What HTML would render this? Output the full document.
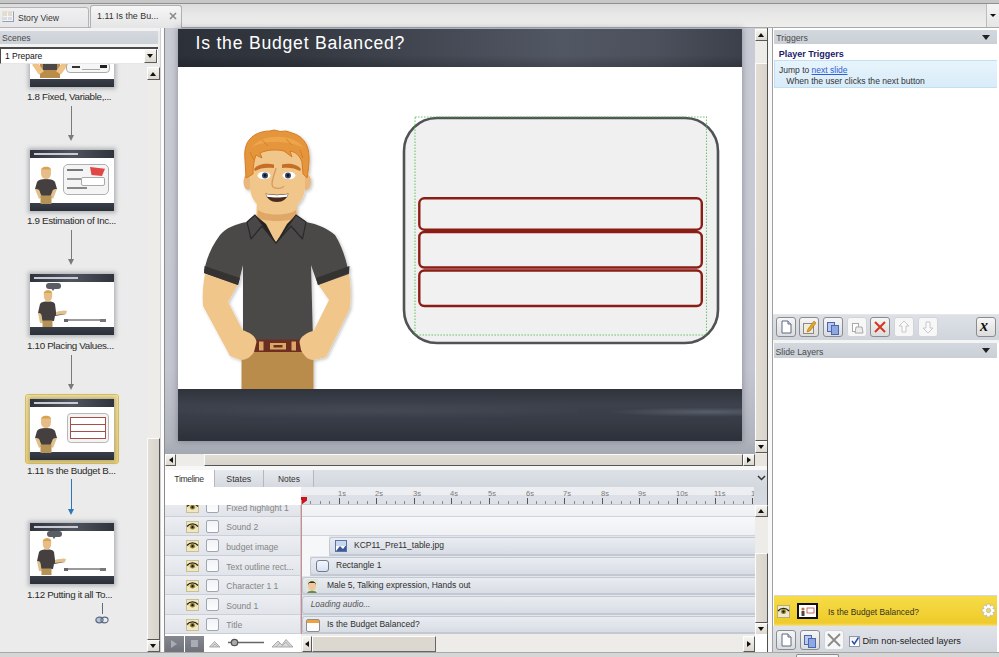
<!DOCTYPE html>
<html><head><meta charset="utf-8">
<style>
*{margin:0;padding:0;box-sizing:border-box}
html,body{width:999px;height:657px;overflow:hidden;background:#d6d6d6;font-family:"Liberation Sans",sans-serif;color:#333}
.a{position:absolute}
.t{white-space:nowrap}
</style></head><body>
<div class="a" style="left:0px;top:0px;width:999px;height:3px;background:#c7c7c7"></div>
<div class="a" style="left:0px;top:3px;width:999px;height:1px;background:#8f8f8f"></div>
<div class="a" style="left:0px;top:4px;width:999px;height:24px;background:linear-gradient(#dcdcde,#e6e7e6 40%,#eff0ed)"></div>
<div class="a" style="left:0px;top:27px;width:999px;height:1px;background:#a9a9a9"></div>
<div class="a" style="left:-3px;top:7px;width:92px;height:21px;background:linear-gradient(#f0f0f1,#e6e6e8);border:1px solid #b4b4b4;border-radius:3px 3px 0 0"></div>
<div class="a" style="left:2px;top:11px;width:12px;height:11px;border:1px solid #8fa0b4;border-top-color:#e0e0e0;border-left-color:#e0e0e0;background:#f3f3f3"></div>
<div class="a" style="left:3px;top:12px;width:4px;height:4px;background:#e2dccb"></div>
<div class="a" style="left:8px;top:12px;width:4px;height:4px;background:#e2dccb"></div>
<div class="a" style="left:3px;top:17px;width:4px;height:3px;background:#d8dce2"></div>
<div class="a" style="left:8px;top:17px;width:4px;height:3px;background:#d8dce2"></div>
<div class="a t" style="left:18px;top:13.72px;font-size:8.6px;line-height:8.6px;color:#333">Story View</div>
<div class="a" style="left:90px;top:5px;width:92px;height:24px;background:linear-gradient(#f6f6f6,#e4e4e5);border:1px solid #b0b0b0;border-bottom:none;border-radius:3px 3px 0 0"></div>
<div class="a t" style="left:97px;top:12.47px;font-size:8.9px;line-height:8.9px;color:#333">1.11 Is the Bu...</div>
<svg class="a" style="left:169px;top:12px" width="8" height="8"><path d="M1 1L7 7M7 1L1 7" stroke="#8a8a8a" stroke-width="1.6"/></svg>
<div class="a" style="left:986px;top:4px;width:13px;height:23px;border-left:1px solid #bdbdbd;background:linear-gradient(#f4f4f4,#e6e6e6)"></div>
<div class="a" style="left:990px;top:14px;border-left:3px solid transparent;border-right:3px solid transparent;border-top:3px solid #111"></div>
<div class="a" style="left:0px;top:28px;width:161px;height:624px;background:#ebebeb"></div>
<div class="a" style="left:0px;top:28px;width:160px;height:3px;background:#f2f2f2"></div>
<div class="a" style="left:0px;top:30.5px;width:158px;height:13.5px;background:linear-gradient(#d5d9df,#ccd1d8)"></div>
<div class="a t" style="left:2px;top:33.72px;font-size:8.6px;line-height:8.6px;color:#4a4a4a">Scenes</div>
<div class="a" style="left:0px;top:44px;width:158px;height:3px;background:#f2f2f2"></div>
<div class="a" style="left:0px;top:47px;width:158px;height:17px;background:#fff;border:1px solid #4a4a4a;border-top-width:2px;border-left-width:1px;border-right:none;border-bottom:1px solid #e6e6e6"></div>
<div class="a t" style="left:5px;top:51.80px;font-size:8.5px;line-height:8.5px;color:#111">1 Prepare</div>
<div class="a" style="left:144px;top:49px;width:13px;height:14px;background:linear-gradient(#f7f5f1,#dcd8cf);border:1px solid;border-color:#fdfdfd #5a5a5a #5a5a5a #fdfdfd"></div>
<div class="a" style="left:147.0px;top:54.0px;border-left:3.5px solid transparent;border-right:3.5px solid transparent;border-top:4px solid #111"></div>
<div class="a" style="left:147px;top:67px;width:13px;height:585px;background:#eeece8"></div>
<div class="a" style="left:147px;top:438px;width:13px;height:202px;background:linear-gradient(90deg,#e2ded6,#d8d4cb);border:1px solid;border-color:#fbfbfb #555 #555 #fbfbfb"></div>
<div class="a" style="left:147px;top:67px;width:13px;height:13px;background:linear-gradient(#f7f5f1,#dcd8cf);border:1px solid;border-color:#fdfdfd #5a5a5a #5a5a5a #fdfdfd"></div>
<div class="a" style="left:150.0px;top:71.5px;border-left:3.5px solid transparent;border-right:3.5px solid transparent;border-bottom:4px solid #111"></div>
<div class="a" style="left:147px;top:640px;width:13px;height:12px;background:linear-gradient(#f7f5f1,#dcd8cf);border:1px solid;border-color:#fdfdfd #5a5a5a #5a5a5a #fdfdfd"></div>
<div class="a" style="left:150.0px;top:644.0px;border-left:3.5px solid transparent;border-right:3.5px solid transparent;border-top:4px solid #111"></div>
<div class="a" style="left:0;top:64px;width:147px;height:588px;overflow:hidden">
<div class="a" style="left:30px;top:-38px;width:84px;height:61px;background:#fff;box-shadow:0 0 4px 2px rgba(110,115,125,0.45)">
<div class="a" style="left:0;top:0;width:84px;height:61px;filter:blur(0.3px)">
<div class="a" style="left:0;top:53px;width:84px;height:8px;background:linear-gradient(#3a3e48,#2b2f38)"></div>
<div class="a" style="left:10px;top:38px;width:20px;height:14px;background:#b98c4b"></div><div class="a" style="left:13px;top:38px;width:14px;height:6px;background:#4b4847"></div><div class="a" style="left:5px;top:36px;width:6px;height:12px;background:#eec38a;transform:rotate(-35deg)"></div><div class="a" style="left:29px;top:36px;width:6px;height:12px;background:#eec38a;transform:rotate(35deg)"></div><div class="a" style="left:36px;top:36px;width:44px;height:11px;border:1px solid #aaa;border-radius:4px;background:#f6f6f6"></div><div class="a" style="left:42px;top:40px;width:8px;height:2px;background:#333"></div><div class="a" style="left:52px;top:43px;width:18px;height:1px;background:#aaa"></div><div class="a" style="left:70px;top:39px;width:7px;height:3px;background:#222"></div>
</div></div>
<div class="a t" style="left:27px;top:28.20px;font-size:9.8px;line-height:9.8px;color:#2a2a2a;letter-spacing:-0.33px">1.8 Fixed, Variable,...</div>
<div class="a" style="left:71px;top:42px;width:1px;height:30px;background:#7a7a7a"></div>
<div class="a" style="left:68px;top:71px;border-left:3.5px solid transparent;border-right:3.5px solid transparent;border-top:6px solid #7a7a7a"></div>
<div class="a" style="left:30px;top:86px;width:84px;height:61px;background:#fff;box-shadow:0 0 4px 2px rgba(110,115,125,0.45)">
<div class="a" style="left:0;top:0;width:84px;height:61px;filter:blur(0.3px)">
<div class="a" style="left:0;top:0;width:84px;height:8px;background:linear-gradient(90deg,#2f333c,#50545e,#2f333c)"></div><div class="a" style="left:4px;top:3px;width:44px;height:2px;background:#c9ccd2"></div>
<div class="a" style="left:0;top:53px;width:84px;height:8px;background:linear-gradient(#3a3e48,#2b2f38)"></div>
<svg class="a" style="left:5px;top:16px" width="22.0" height="38.0" viewBox="0 0 22 38"><path d="M2 16 C3 14 6 13 11 13 C16 13 19 14 20 16 L22 23 L18 24 L17 30 L5 30 L4 24 L0 23 Z" fill="#45403f"/><path d="M0 23 L4 24 L7 31 L4 33 Z M22 23 L18 24 L15 31 L18 33 Z" fill="#e2c08c"/><rect x="5.5" y="29.5" width="11" height="8.5" fill="#b59256"/><ellipse cx="11" cy="7.3" rx="5" ry="6" fill="#e6bd86"/><path d="M6 6 C5.5 1.5 8.5 0.8 11 0.8 C14 0.8 16.5 1.5 16 6 L15 3.5 L7 3.5 Z" fill="#d8a24e"/></svg><div class="a" style="left:33px;top:14px;width:46px;height:31px;background:#f4f4f4;border:1px solid #b0b0b0;border-radius:5px"></div><div class="a" style="left:60px;top:17px;width:15px;height:9px;background:#e04848;clip-path:polygon(0 0,100% 20%,80% 100%,10% 90%)"></div><div class="a" style="left:37px;top:19px;width:16px;height:2px;background:#777"></div><div class="a" style="left:37px;top:28px;width:14px;height:2px;background:#999"></div><div class="a" style="left:37px;top:37px;width:20px;height:2px;background:#888"></div><div class="a" style="left:51px;top:27px;width:24px;height:9px;border:1px solid #aaa;background:#fff;border-radius:2px"></div>
</div></div>
<div class="a t" style="left:27px;top:152.20px;font-size:9.8px;line-height:9.8px;color:#2a2a2a;letter-spacing:-0.33px">1.9 Estimation of Inc...</div>
<div class="a" style="left:71px;top:166px;width:1px;height:30px;background:#7a7a7a"></div>
<div class="a" style="left:68px;top:195px;border-left:3.5px solid transparent;border-right:3.5px solid transparent;border-top:6px solid #7a7a7a"></div>
<div class="a" style="left:30px;top:210px;width:84px;height:61px;background:#fff;box-shadow:0 0 4px 2px rgba(110,115,125,0.45)">
<div class="a" style="left:0;top:0;width:84px;height:61px;filter:blur(0.3px)">
<div class="a" style="left:0;top:0;width:84px;height:8px;background:linear-gradient(90deg,#2f333c,#50545e,#2f333c)"></div><div class="a" style="left:4px;top:3px;width:44px;height:2px;background:#c9ccd2"></div>
<div class="a" style="left:0;top:53px;width:84px;height:8px;background:linear-gradient(#3a3e48,#2b2f38)"></div>
<svg class="a" style="left:7px;top:16px" width="30" height="37" viewBox="0 0 30 37"><path d="M3 14 C4 12 7 11.5 11 11.5 C15 11.5 17 12 18 14 L19 22 L28 21.5 L29 24 L18 26 L17 31 L5 31 L4 24 L1 23 Z" fill="#45403f"/><path d="M19 22 L27 20.5 L30 21 L29 24 L19 25 Z" fill="#e2c08c"/><path d="M1 23 L4 24 L6 33 L3 33 Z" fill="#e2c08c"/><rect x="5.5" y="30.5" width="10" height="6.5" fill="#b59256"/><ellipse cx="11" cy="6" rx="4.2" ry="5.6" fill="#e6bd86"/><path d="M6.8 5 C6.5 1 9 0.3 11 0.3 C13.5 0.3 15.5 1 15.2 5 L14.3 3 L7.7 3 Z" fill="#d8a24e"/></svg><div class="a" style="left:16px;top:9px;width:15px;height:6px;background:#5a5d63;border-radius:3px"></div><div class="a" style="left:21px;top:14px;border-left:2px solid transparent;border-right:2px solid transparent;border-top:3px solid #5a5d63"></div><div class="a" style="left:34px;top:45px;width:42px;height:2px;background:#9a9a9a"></div><div class="a" style="left:34px;top:44.5px;width:4px;height:3px;background:#666"></div><div class="a" style="left:70px;top:44.5px;width:6px;height:3px;background:#777"></div>
</div></div>
<div class="a t" style="left:27px;top:277.20px;font-size:9.8px;line-height:9.8px;color:#2a2a2a;letter-spacing:-0.33px">1.10 Placing Values...</div>
<div class="a" style="left:71px;top:291px;width:1px;height:30px;background:#7a7a7a"></div>
<div class="a" style="left:68px;top:320px;border-left:3.5px solid transparent;border-right:3.5px solid transparent;border-top:6px solid #7a7a7a"></div>
<div class="a" style="left:25px;top:330px;width:94px;height:70px;background:linear-gradient(#f7e49c,#f0d674);border:1px solid #dcc05c;border-radius:3px"></div>
<div class="a" style="left:30px;top:335px;width:84px;height:61px;background:#fff;box-shadow:0 0 4px 2px rgba(110,115,125,0.45)">
<div class="a" style="left:0;top:0;width:84px;height:61px;filter:blur(0.3px)">
<div class="a" style="left:0;top:0;width:84px;height:8px;background:linear-gradient(90deg,#2f333c,#50545e,#2f333c)"></div><div class="a" style="left:4px;top:3px;width:44px;height:2px;background:#c9ccd2"></div>
<div class="a" style="left:0;top:53px;width:84px;height:8px;background:linear-gradient(#3a3e48,#2b2f38)"></div>
<svg class="a" style="left:5px;top:16px" width="22.0" height="38.0" viewBox="0 0 22 38"><path d="M2 16 C3 14 6 13 11 13 C16 13 19 14 20 16 L22 23 L18 24 L17 30 L5 30 L4 24 L0 23 Z" fill="#45403f"/><path d="M0 23 L4 24 L7 31 L4 33 Z M22 23 L18 24 L15 31 L18 33 Z" fill="#e2c08c"/><rect x="5.5" y="29.5" width="11" height="8.5" fill="#b59256"/><ellipse cx="11" cy="7.3" rx="5" ry="6" fill="#e6bd86"/><path d="M6 6 C5.5 1.5 8.5 0.8 11 0.8 C14 0.8 16.5 1.5 16 6 L15 3.5 L7 3.5 Z" fill="#d8a24e"/></svg><div class="a" style="left:37px;top:14px;width:42px;height:30px;background:#f3f3f3;border:1px solid #b8b8b8;border-radius:4px"></div><div class="a" style="left:40px;top:18px;width:36px;height:22px;border:1px solid #a65048;background:repeating-linear-gradient(#fff 0,#fff 6px,#a65048 6px,#a65048 7px)"></div>
</div></div>
<div class="a t" style="left:27px;top:402.20px;font-size:9.8px;line-height:9.8px;color:#2a2a2a;letter-spacing:-0.33px">1.11 Is the Budget B...</div>
<div class="a" style="left:71px;top:415px;width:1px;height:31px;background:#2a78b8"></div>
<div class="a" style="left:68px;top:445px;border-left:3.5px solid transparent;border-right:3.5px solid transparent;border-top:6px solid #2a78b8"></div>
<div class="a" style="left:30px;top:459px;width:84px;height:61px;background:#fff;box-shadow:0 0 4px 2px rgba(110,115,125,0.45)">
<div class="a" style="left:0;top:0;width:84px;height:61px;filter:blur(0.3px)">
<div class="a" style="left:0;top:0;width:84px;height:8px;background:linear-gradient(90deg,#2f333c,#50545e,#2f333c)"></div><div class="a" style="left:4px;top:3px;width:44px;height:2px;background:#c9ccd2"></div>
<div class="a" style="left:0;top:53px;width:84px;height:8px;background:linear-gradient(#3a3e48,#2b2f38)"></div>
<svg class="a" style="left:6px;top:15px" width="30" height="37" viewBox="0 0 30 37"><path d="M3 14 C4 12 7 11.5 11 11.5 C15 11.5 17 12 18 14 L19 22 L28 21.5 L29 24 L18 26 L17 31 L5 31 L4 24 L1 23 Z" fill="#45403f"/><path d="M19 22 L27 20.5 L30 21 L29 24 L19 25 Z" fill="#e2c08c"/><path d="M1 23 L4 24 L6 33 L3 33 Z" fill="#e2c08c"/><rect x="5.5" y="30.5" width="10" height="6.5" fill="#b59256"/><ellipse cx="11" cy="6" rx="4.2" ry="5.6" fill="#e6bd86"/><path d="M6.8 5 C6.5 1 9 0.3 11 0.3 C13.5 0.3 15.5 1 15.2 5 L14.3 3 L7.7 3 Z" fill="#d8a24e"/></svg><div class="a" style="left:17px;top:8px;width:15px;height:6px;background:#5a5d63;border-radius:3px"></div><div class="a" style="left:22px;top:13px;border-left:2px solid transparent;border-right:2px solid transparent;border-top:3px solid #5a5d63"></div><div class="a" style="left:34px;top:45px;width:42px;height:2px;background:#9a9a9a"></div><div class="a" style="left:34px;top:44.5px;width:4px;height:3px;background:#666"></div><div class="a" style="left:70px;top:44.5px;width:6px;height:3px;background:#777"></div>
</div></div>
<div class="a t" style="left:27px;top:526.20px;font-size:9.8px;line-height:9.8px;color:#2a2a2a;letter-spacing:-0.33px">1.12 Putting it all To...</div>
<div class="a" style="left:102px;top:539px;width:1px;height:11px;background:#5b6b82"></div>
<svg class="a" style="left:95px;top:552px" width="14" height="8"><ellipse cx="4.5" cy="4" rx="3.6" ry="2.8" fill="#b7c6d8" stroke="#5a6b84" stroke-width="1.2"/><ellipse cx="9.5" cy="4" rx="3.6" ry="2.8" fill="none" stroke="#5a6b84" stroke-width="1.2"/></svg>
</div>
<div class="a" style="left:160px;top:28px;width:1px;height:624px;background:#d0d0d0"></div>
<div class="a" style="left:161px;top:28px;width:3px;height:624px;background:#fcfcfc"></div>
<div class="a" style="left:164px;top:28px;width:1px;height:624px;background:#8c8c8c"></div>
<div class="a" style="left:165px;top:28px;width:590px;height:426px;background:linear-gradient(#c9ccd4,#c4c7d0 80%,#b0b4bc 97%,#a4a8b0)"></div>
<div class="a" style="left:178px;top:29px;width:564px;height:412px;box-shadow:0 0 6px 1px rgba(60,60,80,0.35)"></div>
<div class="a" style="left:178px;top:29px;width:564px;height:412px;background:#fff;overflow:hidden">
<div class="a" style="left:0;top:0;width:564px;height:38px;background:linear-gradient(90deg,#2c3039 0%,#323740 20%,#434853 45%,#525764 68%,#4b505c 85%,#3c404a 100%)"></div>
<div class="a" style="left:0;top:26px;width:564px;height:12px;background:linear-gradient(rgba(0,0,0,0),rgba(0,0,0,0.18))"></div>
<svg class="a" style="left:0;top:0" width="564" height="412" viewBox="178 29 564 412">
 <defs>
  <filter id="ds" x="-20%" y="-20%" width="140%" height="140%"><feDropShadow dx="1.5" dy="1.5" stdDeviation="1.6" flood-color="#000" flood-opacity="0.22"/></filter>
 </defs>
 <!-- rounded box -->
 <rect x="404" y="118" width="314" height="225" rx="33" ry="33" fill="#f0f0f1" stroke="#505255" stroke-width="2.6"/>
 <rect x="415" y="117" width="291.5" height="218" fill="none" stroke="#3cb83c" stroke-width="1.1" stroke-dasharray="1.6 1.4" opacity="0.75"/>
 <rect x="419.3" y="198.3" width="282.5" height="31.4" rx="5" fill="#f1f1f2" stroke="#8b1d14" stroke-width="2.4"/>
 <rect x="419.3" y="232" width="282.5" height="35.5" rx="5" fill="#f1f1f2" stroke="#8b1d14" stroke-width="2.4"/>
 <rect x="419.3" y="270.5" width="282.5" height="35.5" rx="5" fill="#f1f1f2" stroke="#8b1d14" stroke-width="2.4"/>

 <g filter="url(#ds)">
 <!-- pants -->
 <rect x="241.5" y="349" width="72" height="41" fill="#b98c4b"/>
 <!-- arms -->
 <path d="M205 274 L238 284 L228 302 L243 331 L256 340 L254 352 L241 360 L230 356 L203 306 C202 296 203 284 205 274 Z" fill="#f0c68a"/>
 <path d="M349 274 L318 284 L329 300 L313 332 L300 340 L301 350 L313 360 L326 357 L350 308 C351 296 351 284 349 274 Z" fill="#f0c68a"/>
 <!-- neck -->
 <path d="M257 198 L297 198 L297 222 L276 243 L256 222 Z" fill="#f0c68a"/>
 <path d="M258 210 C266 216 288 216 296 210 L297 218 C288 222 266 222 257 218 Z" fill="#e0a868"/>
 <!-- shirt -->
 <path d="M255 215 L276 243 L296 215 L306 222 C318 224 328 229 335 235 C342 246 347 262 349 274 L318 285 L311 265 L313 342 L243 342 L243 265 L238 285 L204 273 C206 258 212 246 220 235 C226 228 235 224 247 222 Z" fill="#4b4847"/>
 <!-- cuffs -->
 <path d="M204.5 266 L240 278 L238 285 L204 273 Z" fill="#353232"/>
 <path d="M349.5 266 L316 278 L318 285 L349 273 Z" fill="#353232"/>
 <!-- collar -->
 <path d="M255 215 L247 222 L251 239 L262 226 L276 243 Z" fill="#4a4746" stroke="#2c2a2a" stroke-width="1.2" stroke-linejoin="round"/>
 <path d="M296 215 L306 222 L302.5 239 L291 226 L276 243 Z" fill="#4a4746" stroke="#2c2a2a" stroke-width="1.2" stroke-linejoin="round"/>
 <path d="M255 215 L276 243 L266 224 Z" fill="#262424"/>
 <path d="M296 215 L276 243 L287 224 Z" fill="#262424"/>
 <!-- belt -->
 <rect x="247" y="339.5" width="62" height="12.5" fill="#6d2e22"/>
 <rect x="259" y="341.5" width="4.5" height="9" fill="#d9a866"/>
 <rect x="270" y="343" width="16" height="6.5" fill="#d9a866"/>
 <rect x="273.5" y="345" width="9" height="2.5" fill="#6d2e22"/>
 <rect x="291.5" y="341.5" width="4.5" height="9" fill="#d9a866"/>
 <!-- hands -->
 <path d="M242 330 C249 332 256 336 256.5 342 L254 352 C251 357 246 360 241 360 L232 356 L226 340 Z" fill="#f0c68a"/>
 <path d="M313 331 C306 333 300 337 299.5 342 L301 350 C304 356 308 360 313.5 360 L325 357 L330 340 Z" fill="#f0c68a"/>
 <!-- ears -->
 <ellipse cx="248" cy="182" rx="4.5" ry="8" fill="#e9b77c"/>
 <ellipse cx="306.5" cy="182" rx="4.5" ry="8" fill="#e9b77c"/>
 <!-- face -->
 <path d="M250 158 C250 142 262 138 277.5 138 C293 138 305 142 305 158 L305 186 C305 203 293 211 277.5 211 C262 211 250 203 250 186 Z" fill="#f0c68a"/>
 <!-- hair -->
 <path d="M246 178 L245 160 C244 150 246 143 250 139 C254 134 262 131 270 131 L274 130 L280 131.5 L286 131 L292 133 C300 135 306 141 308 149 C310 157 309 167 307 178 L303 174 L302 162 C300 156 296 152 290 151 L292 157 L284 151 C276 149 266 150 260 153 L262 158 L256 155 C254 160 253 167 253 174 Z" fill="#e5953a" stroke="#d67c26" stroke-width="1"/>
 <path d="M252 147 C258 139 270 136 282 137 C292 138 300 142 304 148 C296 144 286 142 276 142 C266 142 258 144 252 147 Z" fill="#f0aa50" opacity="0.75"/>
 <path d="M262 140 L268 146 M286 139 L292 145 M250 152 L254 160 M300 150 L303 158" stroke="#cf7420" stroke-width="1" opacity="0.7"/>
 <!-- brows -->
 <path d="M254 169 C258 164 266 163 274 164.5 L274 168 C266 167 260 168 255 171 Z" fill="#c66d26"/>
 <path d="M301 169 C297 164 289 163 282 164.5 L282 168 C289 167 295 168 300 171 Z" fill="#c66d26"/>
 <!-- eyes -->
 <ellipse cx="264" cy="175.5" rx="6.5" ry="3.8" fill="#fff"/>
 <ellipse cx="289" cy="175.5" rx="6.5" ry="3.8" fill="#fff"/>
 <circle cx="265" cy="175.5" r="3" fill="#3b4c6f"/>
 <circle cx="288" cy="175.5" r="3" fill="#3b4c6f"/>
 <circle cx="265" cy="175.5" r="1.4" fill="#101425"/>
 <circle cx="288" cy="175.5" r="1.4" fill="#101425"/>
 <!-- nose -->
 <path d="M276 168 C274 176 270 184 273 187 C276 189 282 189 284 186" fill="none" stroke="#d69a5c" stroke-width="1.3"/>
 <!-- mouth -->
 <path d="M265.5 193.5 C272 195 282 195 288.5 193.5 C287 199 283 202 277 202 C271 202 267 199 265.5 193.5 Z" fill="#4a2a1c"/>
 <path d="M266 194 C272 195.5 282 195.5 288 194 L287 196.8 C281 197.8 273 197.8 267 196.8 Z" fill="#fff"/>
 </g>
</svg>
<div class="a" style="left:0;top:360px;width:564px;height:52px;background:linear-gradient(#2e333c,#3c414b 30%,#363b45 65%,#2c3038)"></div>
<div class="a" style="left:380px;top:375px;width:200px;height:16px;background:radial-gradient(ellipse 50% 30% at 75% 50%,rgba(170,180,195,0.28),rgba(170,180,195,0) 100%)"></div>
<div class="a" style="left:0;top:372px;width:400px;height:20px;background:radial-gradient(ellipse 60% 40% at 50% 50%,rgba(150,160,175,0.10),rgba(150,160,175,0) 100%)"></div>
</div>
<div class="a t" style="left:195.5px;top:35.10px;font-size:17.6px;line-height:17.6px;color:#fff;letter-spacing:0.78px">Is the Budget Balanced?</div>
<div class="a" style="left:755px;top:29px;width:13px;height:425px;background:#eeece8"></div>
<div class="a" style="left:755px;top:63px;width:13px;height:378px;background:linear-gradient(90deg,#e2ded6,#d8d4cb);border:1px solid;border-color:#fbfbfb #555 #555 #fbfbfb"></div>
<div class="a" style="left:755px;top:29px;width:13px;height:12px;background:linear-gradient(#f7f5f1,#dcd8cf);border:1px solid;border-color:#fdfdfd #5a5a5a #5a5a5a #fdfdfd"></div>
<div class="a" style="left:758.0px;top:33.0px;border-left:3.5px solid transparent;border-right:3.5px solid transparent;border-bottom:4px solid #111"></div>
<div class="a" style="left:755px;top:441px;width:13px;height:12px;background:linear-gradient(#f7f5f1,#dcd8cf);border:1px solid;border-color:#fdfdfd #5a5a5a #5a5a5a #fdfdfd"></div>
<div class="a" style="left:758.0px;top:445.0px;border-left:3.5px solid transparent;border-right:3.5px solid transparent;border-top:4px solid #111"></div>
<div class="a" style="left:165px;top:454px;width:590px;height:12px;background:#eeece8"></div>
<div class="a" style="left:204px;top:454px;width:539px;height:12px;background:linear-gradient(#e2ded6,#d8d4cb);border:1px solid;border-color:#fbfbfb #555 #555 #fbfbfb"></div>
<div class="a" style="left:165px;top:454px;width:11px;height:12px;background:linear-gradient(#f7f5f1,#dcd8cf);border:1px solid;border-color:#fdfdfd #5a5a5a #5a5a5a #fdfdfd"></div>
<div class="a" style="left:168.5px;top:456.5px;border-top:3.5px solid transparent;border-bottom:3.5px solid transparent;border-right:4px solid #111"></div>
<div class="a" style="left:743px;top:454px;width:12px;height:12px;background:linear-gradient(#f7f5f1,#dcd8cf);border:1px solid;border-color:#fdfdfd #5a5a5a #5a5a5a #fdfdfd"></div>
<div class="a" style="left:747.0px;top:456.5px;border-top:3.5px solid transparent;border-bottom:3.5px solid transparent;border-left:4px solid #111"></div>
<div class="a" style="left:755px;top:454px;width:12px;height:12px;background:#e8e5df"></div>
<div class="a" style="left:767px;top:28px;width:1px;height:624px;background:#4f4f4f"></div>
<div class="a" style="left:165px;top:466px;width:602px;height:4px;background:#f7f7f7"></div>
<div class="a" style="left:165px;top:470px;width:602px;height:35px;background:linear-gradient(#dde1e7,#d3d8df 17px,#d7dbe1 35px)"></div>
<div class="a" style="left:165px;top:470px;width:49px;height:17px;background:#fff"></div>
<div class="a" style="left:214px;top:470px;width:50px;height:17px;background:linear-gradient(#e6e9ee,#d6dae0);border-left:1px solid #b5b9bf;border-right:1px solid #b5b9bf"></div>
<div class="a" style="left:264px;top:470px;width:50px;height:17px;background:linear-gradient(#e6e9ee,#d6dae0);border-right:1px solid #b5b9bf"></div>
<div class="a t" style="left:174.3px;top:475.22px;font-size:8.6px;line-height:8.6px;color:#333;letter-spacing:-0.35px">Timeline</div>
<div class="a t" style="left:226.3px;top:475.05px;font-size:8.8px;line-height:8.8px;color:#333">States</div>
<div class="a t" style="left:278px;top:475.39px;font-size:8.4px;line-height:8.4px;color:#333">Notes</div>
<svg class="a" style="left:757px;top:475px" width="9" height="6"><path d="M1 1L4.5 4.5L8 1" fill="none" stroke="#333" stroke-width="1.5"/></svg>
<div class="a" style="left:165px;top:487px;width:136px;height:18px;background:#fff"></div>
<div class="a" style="left:301px;top:487px;width:453px;height:18px;background:linear-gradient(#eceef2 0,#eceef2 8px,#dde1e7 8px,#dde1e7 100%);border-bottom:1px solid #c4c9d0;overflow:hidden">
<div class="a" style="left:9px;top:14px;width:1px;height:3px;background:#8a8a8a"></div>
<div class="a" style="left:19px;top:14px;width:1px;height:3px;background:#8a8a8a"></div>
<div class="a" style="left:28px;top:14px;width:1px;height:3px;background:#8a8a8a"></div>
<div class="a" style="left:38px;top:11px;width:1px;height:6px;background:#555"></div>
<div class="a t" style="left:37px;top:3.15px;font-size:7.5px;line-height:7.5px;color:#7a7a7a">1s</div>
<div class="a" style="left:47px;top:14px;width:1px;height:3px;background:#8a8a8a"></div>
<div class="a" style="left:56px;top:14px;width:1px;height:3px;background:#8a8a8a"></div>
<div class="a" style="left:66px;top:14px;width:1px;height:3px;background:#8a8a8a"></div>
<div class="a" style="left:75px;top:11px;width:1px;height:6px;background:#555"></div>
<div class="a t" style="left:74px;top:3.15px;font-size:7.5px;line-height:7.5px;color:#7a7a7a">2s</div>
<div class="a" style="left:85px;top:14px;width:1px;height:3px;background:#8a8a8a"></div>
<div class="a" style="left:94px;top:14px;width:1px;height:3px;background:#8a8a8a"></div>
<div class="a" style="left:103px;top:14px;width:1px;height:3px;background:#8a8a8a"></div>
<div class="a" style="left:113px;top:11px;width:1px;height:6px;background:#555"></div>
<div class="a t" style="left:112px;top:3.15px;font-size:7.5px;line-height:7.5px;color:#7a7a7a">3s</div>
<div class="a" style="left:122px;top:14px;width:1px;height:3px;background:#8a8a8a"></div>
<div class="a" style="left:132px;top:14px;width:1px;height:3px;background:#8a8a8a"></div>
<div class="a" style="left:141px;top:14px;width:1px;height:3px;background:#8a8a8a"></div>
<div class="a" style="left:150px;top:11px;width:1px;height:6px;background:#555"></div>
<div class="a t" style="left:149px;top:3.15px;font-size:7.5px;line-height:7.5px;color:#7a7a7a">4s</div>
<div class="a" style="left:160px;top:14px;width:1px;height:3px;background:#8a8a8a"></div>
<div class="a" style="left:169px;top:14px;width:1px;height:3px;background:#8a8a8a"></div>
<div class="a" style="left:179px;top:14px;width:1px;height:3px;background:#8a8a8a"></div>
<div class="a" style="left:188px;top:11px;width:1px;height:6px;background:#555"></div>
<div class="a t" style="left:187px;top:3.15px;font-size:7.5px;line-height:7.5px;color:#7a7a7a">5s</div>
<div class="a" style="left:197px;top:14px;width:1px;height:3px;background:#8a8a8a"></div>
<div class="a" style="left:207px;top:14px;width:1px;height:3px;background:#8a8a8a"></div>
<div class="a" style="left:216px;top:14px;width:1px;height:3px;background:#8a8a8a"></div>
<div class="a" style="left:226px;top:11px;width:1px;height:6px;background:#555"></div>
<div class="a t" style="left:225px;top:3.15px;font-size:7.5px;line-height:7.5px;color:#7a7a7a">6s</div>
<div class="a" style="left:235px;top:14px;width:1px;height:3px;background:#8a8a8a"></div>
<div class="a" style="left:244px;top:14px;width:1px;height:3px;background:#8a8a8a"></div>
<div class="a" style="left:254px;top:14px;width:1px;height:3px;background:#8a8a8a"></div>
<div class="a" style="left:263px;top:11px;width:1px;height:6px;background:#555"></div>
<div class="a t" style="left:262px;top:3.15px;font-size:7.5px;line-height:7.5px;color:#7a7a7a">7s</div>
<div class="a" style="left:273px;top:14px;width:1px;height:3px;background:#8a8a8a"></div>
<div class="a" style="left:282px;top:14px;width:1px;height:3px;background:#8a8a8a"></div>
<div class="a" style="left:291px;top:14px;width:1px;height:3px;background:#8a8a8a"></div>
<div class="a" style="left:301px;top:11px;width:1px;height:6px;background:#555"></div>
<div class="a t" style="left:300px;top:3.15px;font-size:7.5px;line-height:7.5px;color:#7a7a7a">8s</div>
<div class="a" style="left:310px;top:14px;width:1px;height:3px;background:#8a8a8a"></div>
<div class="a" style="left:320px;top:14px;width:1px;height:3px;background:#8a8a8a"></div>
<div class="a" style="left:329px;top:14px;width:1px;height:3px;background:#8a8a8a"></div>
<div class="a" style="left:338px;top:11px;width:1px;height:6px;background:#555"></div>
<div class="a t" style="left:337px;top:3.15px;font-size:7.5px;line-height:7.5px;color:#7a7a7a">9s</div>
<div class="a" style="left:348px;top:14px;width:1px;height:3px;background:#8a8a8a"></div>
<div class="a" style="left:357px;top:14px;width:1px;height:3px;background:#8a8a8a"></div>
<div class="a" style="left:367px;top:14px;width:1px;height:3px;background:#8a8a8a"></div>
<div class="a" style="left:376px;top:11px;width:1px;height:6px;background:#555"></div>
<div class="a t" style="left:375px;top:3.15px;font-size:7.5px;line-height:7.5px;color:#7a7a7a">10s</div>
<div class="a" style="left:385px;top:14px;width:1px;height:3px;background:#8a8a8a"></div>
<div class="a" style="left:395px;top:14px;width:1px;height:3px;background:#8a8a8a"></div>
<div class="a" style="left:404px;top:14px;width:1px;height:3px;background:#8a8a8a"></div>
<div class="a" style="left:414px;top:11px;width:1px;height:6px;background:#555"></div>
<div class="a t" style="left:413px;top:3.15px;font-size:7.5px;line-height:7.5px;color:#7a7a7a">11s</div>
<div class="a" style="left:423px;top:14px;width:1px;height:3px;background:#8a8a8a"></div>
<div class="a" style="left:432px;top:14px;width:1px;height:3px;background:#8a8a8a"></div>
<div class="a" style="left:442px;top:14px;width:1px;height:3px;background:#8a8a8a"></div>
<div class="a" style="left:451px;top:11px;width:1px;height:6px;background:#555"></div>
<div class="a t" style="left:450px;top:3.15px;font-size:7.5px;line-height:7.5px;color:#7a7a7a">12s</div>
<div class="a" style="left:461px;top:14px;width:1px;height:3px;background:#8a8a8a"></div>
<div class="a" style="left:470px;top:14px;width:1px;height:3px;background:#8a8a8a"></div>
<div class="a" style="left:479px;top:14px;width:1px;height:3px;background:#8a8a8a"></div>
<div class="a" style="left:0;top:10px;width:6px;height:8px;background:#c8141a;clip-path:polygon(0 0,100% 0,100% 45%,0 100%)"></div>
</div>
<div class="a" style="left:165px;top:505px;width:590px;height:129px;overflow:hidden">
<div class="a" style="left:0px;top:-8px;width:136px;height:20px;background:linear-gradient(#eceef2,#e1e4ea);border-bottom:1px solid #cbd0d7"></div>
<svg class="a" style="left:21px;top:-4px" width="13" height="12" viewBox="0 0 13 12"><rect x="0.5" y="0.5" width="12" height="11" fill="#efe8c8" stroke="#cdbf8a"/><path d="M1.5 6.2 C4 3 9 3 11.5 6.2 C9 9 4 9 1.5 6.2Z" fill="#e6dcb0"/><circle cx="6.5" cy="6.2" r="2.4" fill="#8a7a2a"/><circle cx="6.5" cy="6.2" r="1.1" fill="#1a1608"/><path d="M1 5.5 C4 2 9 2 12 5.5" fill="none" stroke="#2a2418" stroke-width="1.3"/></svg>
<div class="a" style="left:41px;top:-5px;width:13px;height:13px;border:1px solid #a0a6b0;border-radius:2px;background:linear-gradient(#f0f3f7,#fdfdfe)"></div>
<div class="a t" style="left:61.3px;top:-1.28px;font-size:8.6px;line-height:8.6px;color:#858585">Fixed highlight 1</div>
<div class="a" style="left:136px;top:-8px;width:454px;height:20px;background:linear-gradient(#f7f8fa,#eef0f3);border-bottom:1px solid #d0d4da"></div>
<div class="a" style="left:0px;top:12px;width:136px;height:19px;background:linear-gradient(#eceef2,#e1e4ea);border-bottom:1px solid #cbd0d7"></div>
<svg class="a" style="left:21px;top:16px" width="13" height="12" viewBox="0 0 13 12"><rect x="0.5" y="0.5" width="12" height="11" fill="#efe8c8" stroke="#cdbf8a"/><path d="M1.5 6.2 C4 3 9 3 11.5 6.2 C9 9 4 9 1.5 6.2Z" fill="#e6dcb0"/><circle cx="6.5" cy="6.2" r="2.4" fill="#8a7a2a"/><circle cx="6.5" cy="6.2" r="1.1" fill="#1a1608"/><path d="M1 5.5 C4 2 9 2 12 5.5" fill="none" stroke="#2a2418" stroke-width="1.3"/></svg>
<div class="a" style="left:41px;top:15px;width:13px;height:13px;border:1px solid #a0a6b0;border-radius:2px;background:linear-gradient(#f0f3f7,#fdfdfe)"></div>
<div class="a t" style="left:61.3px;top:17.72px;font-size:8.6px;line-height:8.6px;color:#858585">Sound 2</div>
<div class="a" style="left:136px;top:12px;width:454px;height:19px;background:linear-gradient(#f7f8fa,#eef0f3);border-bottom:1px solid #d0d4da"></div>
<div class="a" style="left:0px;top:31px;width:136px;height:20px;background:linear-gradient(#eceef2,#e1e4ea);border-bottom:1px solid #cbd0d7"></div>
<svg class="a" style="left:21px;top:35px" width="13" height="12" viewBox="0 0 13 12"><rect x="0.5" y="0.5" width="12" height="11" fill="#efe8c8" stroke="#cdbf8a"/><path d="M1.5 6.2 C4 3 9 3 11.5 6.2 C9 9 4 9 1.5 6.2Z" fill="#e6dcb0"/><circle cx="6.5" cy="6.2" r="2.4" fill="#8a7a2a"/><circle cx="6.5" cy="6.2" r="1.1" fill="#1a1608"/><path d="M1 5.5 C4 2 9 2 12 5.5" fill="none" stroke="#2a2418" stroke-width="1.3"/></svg>
<div class="a" style="left:41px;top:34px;width:13px;height:13px;border:1px solid #a0a6b0;border-radius:2px;background:linear-gradient(#f0f3f7,#fdfdfe)"></div>
<div class="a t" style="left:61.3px;top:37.72px;font-size:8.6px;line-height:8.6px;color:#858585">budget image</div>
<div class="a" style="left:136px;top:31px;width:454px;height:20px;background:linear-gradient(#e3e7ed,#d6dbe3);border-bottom:1px solid #c4c9d1">
<div class="a" style="left:0px;top:0px;width:28px;height:20px;background:#f6f7f9"></div>
<div class="a" style="left:28px;top:1px;width:426px;height:18px;border:1px solid #c3c9d3;border-right:none;border-radius:3px 0 0 3px;background:linear-gradient(#e9ecf1,#d8dde5)"><svg class="a" style="left:5px;top:2px" width="12" height="12"><rect x="0.5" y="0.5" width="11" height="11" fill="#fff" stroke="#5874a8"/><path d="M1 11 L5 6 L8 9 L11 5 L11 11Z" fill="#3a5a9a"/><rect x="1" y="1" width="10" height="5" fill="#c9d8ee"/></svg><div class="a t" style="left:24px;top:3.2px;font-size:8.5px;line-height:8.5px;color:#2e2e2e;">KCP11_Pre11_table.jpg</div></div>
</div>
<div class="a" style="left:0px;top:51px;width:136px;height:20px;background:linear-gradient(#eceef2,#e1e4ea);border-bottom:1px solid #cbd0d7"></div>
<svg class="a" style="left:21px;top:55px" width="13" height="12" viewBox="0 0 13 12"><rect x="0.5" y="0.5" width="12" height="11" fill="#efe8c8" stroke="#cdbf8a"/><path d="M1.5 6.2 C4 3 9 3 11.5 6.2 C9 9 4 9 1.5 6.2Z" fill="#e6dcb0"/><circle cx="6.5" cy="6.2" r="2.4" fill="#8a7a2a"/><circle cx="6.5" cy="6.2" r="1.1" fill="#1a1608"/><path d="M1 5.5 C4 2 9 2 12 5.5" fill="none" stroke="#2a2418" stroke-width="1.3"/></svg>
<div class="a" style="left:41px;top:54px;width:13px;height:13px;border:1px solid #a0a6b0;border-radius:2px;background:linear-gradient(#f0f3f7,#fdfdfe)"></div>
<div class="a t" style="left:61.3px;top:57.72px;font-size:8.6px;line-height:8.6px;color:#858585">Text outline rect...</div>
<div class="a" style="left:136px;top:51px;width:454px;height:20px;background:linear-gradient(#e3e7ed,#d6dbe3);border-bottom:1px solid #c4c9d1">
<div class="a" style="left:0px;top:0px;width:9px;height:20px;background:#f6f7f9"></div>
<div class="a" style="left:9px;top:1px;width:445px;height:18px;border:1px solid #c3c9d3;border-right:none;border-radius:3px 0 0 3px;background:linear-gradient(#e9ecf1,#d8dde5)"><div class="a" style="left:5px;top:2px;width:13px;height:12px;border:1px solid #6f7c8e;border-radius:3px;background:linear-gradient(#f4f8fd,#d6e2f2)"></div><div class="a t" style="left:25px;top:3.2px;font-size:8.5px;line-height:8.5px;color:#2e2e2e;">Rectangle 1</div></div>
</div>
<div class="a" style="left:0px;top:71px;width:136px;height:19px;background:linear-gradient(#eceef2,#e1e4ea);border-bottom:1px solid #cbd0d7"></div>
<svg class="a" style="left:21px;top:75px" width="13" height="12" viewBox="0 0 13 12"><rect x="0.5" y="0.5" width="12" height="11" fill="#efe8c8" stroke="#cdbf8a"/><path d="M1.5 6.2 C4 3 9 3 11.5 6.2 C9 9 4 9 1.5 6.2Z" fill="#e6dcb0"/><circle cx="6.5" cy="6.2" r="2.4" fill="#8a7a2a"/><circle cx="6.5" cy="6.2" r="1.1" fill="#1a1608"/><path d="M1 5.5 C4 2 9 2 12 5.5" fill="none" stroke="#2a2418" stroke-width="1.3"/></svg>
<div class="a" style="left:41px;top:74px;width:13px;height:13px;border:1px solid #a0a6b0;border-radius:2px;background:linear-gradient(#f0f3f7,#fdfdfe)"></div>
<div class="a t" style="left:61.3px;top:76.72px;font-size:8.6px;line-height:8.6px;color:#858585">Character 1 1</div>
<div class="a" style="left:136px;top:71px;width:454px;height:19px;background:linear-gradient(#e3e7ed,#d6dbe3);border-bottom:1px solid #c4c9d1">
<div class="a" style="left:1px;top:1px;width:453px;height:17px;border:1px solid #c3c9d3;border-right:none;border-radius:3px 0 0 3px;background:linear-gradient(#e9ecf1,#d8dde5)"><svg class="a" style="left:3px;top:1px" width="12" height="14" viewBox="0 0 12 14"><rect width="12" height="14" fill="#dfe8d8"/><ellipse cx="6" cy="7" rx="4" ry="5" fill="#f0c8a0"/><path d="M2 6 C1.5 1 10.5 1 10 6 L9 4 L3 4Z" fill="#3a2e26"/><path d="M1 14 C2 11 10 11 11 14Z" fill="#6a8a5a"/></svg><div class="a t" style="left:24px;top:3.2px;font-size:8.5px;line-height:8.5px;color:#2e2e2e;">Male 5, Talking expression, Hands out</div></div>
</div>
<div class="a" style="left:0px;top:90px;width:136px;height:20px;background:linear-gradient(#eceef2,#e1e4ea);border-bottom:1px solid #cbd0d7"></div>
<svg class="a" style="left:21px;top:94px" width="13" height="12" viewBox="0 0 13 12"><rect x="0.5" y="0.5" width="12" height="11" fill="#efe8c8" stroke="#cdbf8a"/><path d="M1.5 6.2 C4 3 9 3 11.5 6.2 C9 9 4 9 1.5 6.2Z" fill="#e6dcb0"/><circle cx="6.5" cy="6.2" r="2.4" fill="#8a7a2a"/><circle cx="6.5" cy="6.2" r="1.1" fill="#1a1608"/><path d="M1 5.5 C4 2 9 2 12 5.5" fill="none" stroke="#2a2418" stroke-width="1.3"/></svg>
<div class="a" style="left:41px;top:93px;width:13px;height:13px;border:1px solid #a0a6b0;border-radius:2px;background:linear-gradient(#f0f3f7,#fdfdfe)"></div>
<div class="a t" style="left:61.3px;top:96.72px;font-size:8.6px;line-height:8.6px;color:#858585">Sound 1</div>
<div class="a" style="left:136px;top:90px;width:454px;height:20px;background:linear-gradient(#e3e7ed,#d6dbe3);border-bottom:1px solid #c4c9d1">
<div class="a" style="left:1px;top:1px;width:453px;height:18px;border:1px solid #c3c9d3;border-right:none;border-radius:3px 0 0 3px;background:linear-gradient(#e9ecf1,#d8dde5)"><div class="a t" style="left:7.7px;top:3.2px;font-size:8.5px;line-height:8.5px;color:#2e2e2e;font-style:italic;color:#555;font-size:8.4px">Loading audio...</div></div>
</div>
<div class="a" style="left:0px;top:110px;width:136px;height:19px;background:linear-gradient(#eceef2,#e1e4ea);border-bottom:1px solid #cbd0d7"></div>
<svg class="a" style="left:21px;top:114px" width="13" height="12" viewBox="0 0 13 12"><rect x="0.5" y="0.5" width="12" height="11" fill="#efe8c8" stroke="#cdbf8a"/><path d="M1.5 6.2 C4 3 9 3 11.5 6.2 C9 9 4 9 1.5 6.2Z" fill="#e6dcb0"/><circle cx="6.5" cy="6.2" r="2.4" fill="#8a7a2a"/><circle cx="6.5" cy="6.2" r="1.1" fill="#1a1608"/><path d="M1 5.5 C4 2 9 2 12 5.5" fill="none" stroke="#2a2418" stroke-width="1.3"/></svg>
<div class="a" style="left:41px;top:113px;width:13px;height:13px;border:1px solid #a0a6b0;border-radius:2px;background:linear-gradient(#f0f3f7,#fdfdfe)"></div>
<div class="a t" style="left:61.3px;top:115.72px;font-size:8.6px;line-height:8.6px;color:#858585">Title</div>
<div class="a" style="left:136px;top:110px;width:454px;height:19px;background:linear-gradient(#e3e7ed,#d6dbe3);border-bottom:1px solid #c4c9d1">
<div class="a" style="left:1px;top:1px;width:453px;height:17px;border:1px solid #c3c9d3;border-right:none;border-radius:3px 0 0 3px;background:linear-gradient(#e9ecf1,#d8dde5)"><svg class="a" style="left:3px;top:2px" width="14" height="13"><rect x="0.5" y="0.5" width="13" height="12" rx="1.5" fill="#fdfdfd" stroke="#8d8d8d"/><rect x="1" y="1" width="12" height="3" fill="#f0a040"/></svg><div class="a t" style="left:24px;top:3.2px;font-size:8.5px;line-height:8.5px;color:#2e2e2e;">Is the Budget Balanced?</div></div>
</div>
</div>
<div class="a" style="left:300px;top:505px;width:1px;height:129px;background:#c6cad1"></div>
<div class="a" style="left:301px;top:500px;width:1px;height:134px;background:#d08a8a"></div>
<div class="a" style="left:755px;top:505px;width:13px;height:130px;background:#eeece8"></div>
<div class="a" style="left:755px;top:553px;width:13px;height:70px;background:linear-gradient(90deg,#e2ded6,#d8d4cb);border:1px solid;border-color:#fbfbfb #555 #555 #fbfbfb"></div>
<div class="a" style="left:755px;top:505px;width:13px;height:12px;background:linear-gradient(#f7f5f1,#dcd8cf);border:1px solid;border-color:#fdfdfd #5a5a5a #5a5a5a #fdfdfd"></div>
<div class="a" style="left:758.0px;top:509.0px;border-left:3.5px solid transparent;border-right:3.5px solid transparent;border-bottom:4px solid #111"></div>
<div class="a" style="left:755px;top:623px;width:13px;height:12px;background:linear-gradient(#f7f5f1,#dcd8cf);border:1px solid;border-color:#fdfdfd #5a5a5a #5a5a5a #fdfdfd"></div>
<div class="a" style="left:758.0px;top:627.0px;border-left:3.5px solid transparent;border-right:3.5px solid transparent;border-top:4px solid #111"></div>
<div class="a" style="left:165px;top:634px;width:136px;height:18px;background:#fff"></div>
<div class="a" style="left:165px;top:636px;width:19px;height:16px;background:linear-gradient(#858890,#6f727a)"></div>
<div class="a" style="left:171px;top:640px;border-top:4.5px solid transparent;border-bottom:4.5px solid transparent;border-left:6px solid #a9acb3"></div>
<div class="a" style="left:185px;top:636px;width:19px;height:16px;background:linear-gradient(#858890,#6f727a)"></div>
<div class="a" style="left:191px;top:640px;width:7px;height:7px;background:#a9acb3"></div>
<svg class="a" style="left:205px;top:636px" width="95" height="15"><path d="M4.5 11 L9.5 5.5 L15 11 Z" fill="#d8d8d8" stroke="#999" stroke-width="0.8"/><path d="M7 11 L10 8 L13 11" fill="none" stroke="#aaa" stroke-width="0.8"/><line x1="23" y1="6.5" x2="59" y2="6.5" stroke="#666" stroke-width="1.3"/><circle cx="29.5" cy="6.5" r="3.2" fill="#aaa" stroke="#555" stroke-width="1.3"/><path d="M67 11 L73 5 L77 9 L81 3.5 L88 11 Z" fill="#d8d8d8" stroke="#999" stroke-width="0.8"/><path d="M71 11 L75 7 M76 11 L81 6 L85 11" fill="none" stroke="#aaa" stroke-width="0.8"/></svg>
<div class="a" style="left:301px;top:634px;width:454px;height:18px;background:#eeece8"></div>
<div class="a" style="left:302px;top:636px;width:10px;height:16px;background:linear-gradient(#f7f5f1,#dcd8cf);border:1px solid;border-color:#fdfdfd #5a5a5a #5a5a5a #fdfdfd"></div>
<div class="a" style="left:305.0px;top:640.5px;border-top:3.5px solid transparent;border-bottom:3.5px solid transparent;border-right:4px solid #111"></div>
<div class="a" style="left:312px;top:636px;width:124px;height:16px;background:#dcd8cf;border:1px solid;border-color:#fdfdfd #666 #666 #fdfdfd"></div>
<div class="a" style="left:743px;top:636px;width:12px;height:16px;background:linear-gradient(#f7f5f1,#dcd8cf);border:1px solid;border-color:#fdfdfd #5a5a5a #5a5a5a #fdfdfd"></div>
<div class="a" style="left:747.0px;top:640.5px;border-top:3.5px solid transparent;border-bottom:3.5px solid transparent;border-left:4px solid #111"></div>
<div class="a" style="left:755px;top:634px;width:12px;height:18px;background:#fff"></div>
<div class="a" style="left:768px;top:28px;width:231px;height:624px;background:#fff"></div>
<div class="a" style="left:768px;top:28px;width:4px;height:624px;background:#f8f8f8"></div>
<div class="a" style="left:772px;top:28px;width:1px;height:624px;background:#a0a0a0"></div>
<div class="a" style="left:774px;top:30px;width:223px;height:14px;background:linear-gradient(#d3d8de,#cbd0d7)"></div>
<div class="a t" style="left:776.3px;top:33.74px;font-size:8.7px;line-height:8.7px;color:#4a4a4a">Triggers</div>
<div class="a" style="left:982px;top:35px;border-left:4px solid transparent;border-right:4px solid transparent;border-top:5px solid #222"></div>
<div class="a t" style="left:778.7px;top:49.68px;font-size:9px;line-height:9px;font-weight:bold;color:#1a1a6a">Player Triggers</div>
<div class="a" style="left:774px;top:60px;width:225px;height:28px;background:linear-gradient(#e8f4fc,#d8ecf9);border:1px solid #c2e0f4;border-right:none"></div>
<div class="a t" style="left:779px;top:65.80px;font-size:8.5px;line-height:8.5px;color:#333">Jump to <span style="color:#2f5ed6;text-decoration:underline">next slide</span></div>
<div class="a t" style="left:786.3px;top:77.12px;font-size:8.6px;line-height:8.6px;color:#333">When the user clicks the next button</div>
<div class="a" style="left:997px;top:28px;width:2px;height:624px;background:#fff"></div>
<div class="a" style="left:773px;top:315px;width:226px;height:25px;background:linear-gradient(#dde1e7,#d0d5dc)"></div>
<div class="a" style="left:773px;top:314px;width:226px;height:1px;background:#e6e6e6"></div>
<div class="a" style="left:776px;top:317px;width:20px;height:20px;border:1px solid #8a8c90;border-radius:3px;background:linear-gradient(#f6f6f6,#dcdcdc)"></div>
<div class="a" style="left:799px;top:317px;width:20px;height:20px;border:1px solid #8a8c90;border-radius:3px;background:linear-gradient(#f6f6f6,#dcdcdc)"></div>
<div class="a" style="left:823px;top:317px;width:20px;height:20px;border:1px solid #8a8c90;border-radius:3px;background:linear-gradient(#f6f6f6,#dcdcdc)"></div>
<div class="a" style="left:847px;top:317px;width:20px;height:20px;border:1px solid #d2d4d8;border-radius:3px;background:#f7f7f7"></div>
<div class="a" style="left:870px;top:317px;width:20px;height:20px;border:1px solid #8a8c90;border-radius:3px;background:linear-gradient(#f6f6f6,#dcdcdc)"></div>
<div class="a" style="left:894px;top:317px;width:20px;height:20px;border:1px solid #d2d4d8;border-radius:3px;background:#f7f7f7"></div>
<div class="a" style="left:918px;top:317px;width:20px;height:20px;border:1px solid #d2d4d8;border-radius:3px;background:#f7f7f7"></div>
<div class="a" style="left:976px;top:317px;width:20px;height:20px;border:1px solid #8a8c90;border-radius:3px;background:linear-gradient(#f6f6f6,#dcdcdc)"></div>
<div class="a t" style="left:980px;top:317px;font-family:'Liberation Serif',serif;font-style:italic;font-weight:bold;font-size:16px;line-height:18px;color:#111">x</div>
<svg class="a" style="left:776px;top:317px" width="20" height="20"><path d="M6 4 L12 4 L15 7 L15 16 L6 16 Z" fill="#fff" stroke="#5a6a85"/><path d="M12 4 L12 7 L15 7" fill="#dde" stroke="#5a6a85"/></svg>
<svg class="a" style="left:799px;top:317px" width="20" height="20"><rect x="4.5" y="6.5" width="10" height="10" fill="#f2ecda" stroke="#8a8a8a"/><path d="M9 12 L15 4 L17 6 L11 14 L8 15Z" fill="#e4a72a" stroke="#a87010" stroke-width="0.6"/></svg>
<svg class="a" style="left:823px;top:317px" width="20" height="20"><rect x="4.5" y="5.5" width="7" height="9" fill="#b7c9ec" stroke="#4a68b0"/><rect x="8.5" y="8.5" width="7" height="9" fill="#8fa9e0" stroke="#4a68b0"/></svg>
<svg class="a" style="left:847px;top:317px" width="20" height="20"><rect x="5.5" y="6.5" width="6" height="8" fill="#fff" stroke="#aaa"/><path d="M9 10 L15 10 L16 16 L8 16Z" fill="#eee" stroke="#aaa"/></svg>
<svg class="a" style="left:870px;top:317px" width="20" height="20"><path d="M5 5 L15 15 M15 5 L5 15" stroke="#d4361f" stroke-width="2"/></svg>
<svg class="a" style="left:894px;top:317px" width="20" height="20"><path d="M10 4 L15 9 L12 9 L12 15 L8 15 L8 9 L5 9Z" fill="#fafafa" stroke="#c8c8c8"/></svg>
<svg class="a" style="left:918px;top:317px" width="20" height="20"><path d="M10 16 L15 11 L12 11 L12 5 L8 5 L8 11 L5 11Z" fill="#fafafa" stroke="#c8c8c8"/></svg>
<div class="a" style="left:773px;top:340px;width:226px;height:3px;background:#f4f4f4"></div>
<div class="a" style="left:774px;top:343px;width:223px;height:15px;background:linear-gradient(#d3d8de,#cbd0d7)"></div>
<div class="a t" style="left:775.5px;top:347.64px;font-size:8.7px;line-height:8.7px;color:#4a4a4a">Slide Layers</div>
<div class="a" style="left:982px;top:348px;border-left:4px solid transparent;border-right:4px solid transparent;border-top:5px solid #222"></div>
<div class="a" style="left:774px;top:595px;width:223px;height:1px;background:#d8d8d8"></div>
<div class="a" style="left:774px;top:596px;width:223px;height:30px;background:linear-gradient(#f6dc48,#efcb2a 90%,#f3e08a)"></div>
<svg class="a" style="left:777px;top:605px" width="13" height="13" viewBox="0 0 13 13"><rect x="0.5" y="0.5" width="12" height="12" fill="#efe9cc" stroke="#b8ad7a"/><path d="M1.5 6.7 C4 3.5 9 3.5 11.5 6.7 C9 9.5 4 9.5 1.5 6.7Z" fill="#e6dcb0"/><circle cx="6.5" cy="6.7" r="2.4" fill="#8a7a2a"/><circle cx="6.5" cy="6.7" r="1.1" fill="#1a1608"/><path d="M1 6 C4 2.5 9 2.5 12 6" fill="none" stroke="#2a2418" stroke-width="1.3"/></svg>
<div class="a" style="left:797px;top:603px;width:21px;height:16px;background:#fff;border:2px solid #111"></div>
<svg class="a" style="left:799px;top:605px" width="17" height="12"><circle cx="4" cy="4" r="1.6" fill="#b67a3a"/><rect x="2.5" y="6" width="3" height="5" fill="#4b4847"/><rect x="8" y="3" width="7" height="5" fill="#fff" stroke="#c04848" stroke-width="0.8"/></svg>
<div class="a t" style="left:828px;top:607.63px;font-size:8.35px;line-height:8.35px;color:#35321c">Is the Budget Balanced?</div>
<svg class="a" style="left:981px;top:603px" width="15" height="15" viewBox="0 0 15 15"><path d="M13.94 6.06 L13.94 8.94 L11.88 9.46 L11.98 9.22 L13.07 11.04 L11.04 13.07 L9.22 11.98 L9.46 11.88 L8.94 13.94 L6.06 13.94 L5.54 11.88 L5.78 11.98 L3.96 13.07 L1.93 11.04 L3.02 9.22 L3.12 9.46 L1.06 8.94 L1.06 6.06 L3.12 5.54 L3.02 5.78 L1.93 3.96 L3.96 1.93 L5.78 3.02 L5.54 3.12 L6.06 1.06 L8.94 1.06 L9.46 3.12 L9.22 3.02 L11.04 1.93 L13.07 3.96 L11.98 5.78 L11.88 5.54Z" fill="#fdfdfd" stroke="#b8b39a" stroke-width="0.7"/><circle cx="7.5" cy="7.5" r="2.2" fill="#e9d77a" stroke="#b8b39a" stroke-width="0.7"/></svg>
<div class="a" style="left:773px;top:626px;width:224px;height:26px;background:linear-gradient(#e0e4e9,#d2d7dd)"></div>
<div class="a" style="left:776px;top:630px;width:20px;height:20px;border:1px solid #8a8c90;border-radius:3px;background:linear-gradient(#f6f6f6,#dcdcdc)"></div>
<div class="a" style="left:800px;top:630px;width:20px;height:20px;border:1px solid #8a8c90;border-radius:3px;background:linear-gradient(#f6f6f6,#dcdcdc)"></div>
<div class="a" style="left:824px;top:630px;width:20px;height:20px;border:1px solid #d2d4d8;border-radius:3px;background:#f7f7f7"></div>
<svg class="a" style="left:776px;top:630px" width="20" height="20"><path d="M6 4 L12 4 L15 7 L15 16 L6 16 Z" fill="#fff" stroke="#5a6a85"/><path d="M12 4 L12 7 L15 7" fill="#dde" stroke="#5a6a85"/></svg>
<svg class="a" style="left:800px;top:630px" width="20" height="20"><rect x="4.5" y="5.5" width="7" height="9" fill="#b7c9ec" stroke="#4a68b0"/><rect x="8.5" y="8.5" width="7" height="9" fill="#8fa9e0" stroke="#4a68b0"/></svg>
<svg class="a" style="left:824px;top:630px" width="20" height="20"><path d="M4 4 L16 16 M16 4 L4 16" stroke="#8a8a8a" stroke-width="1.8"/></svg>
<div class="a" style="left:849px;top:636px;width:11px;height:11px;border:1px solid #8e98a6;background:linear-gradient(#eef2f6,#fff)"></div>
<svg class="a" style="left:850px;top:636px" width="10" height="10"><path d="M2 5 L4.3 8 L8.5 1.5" fill="none" stroke="#2a50a8" stroke-width="1.5"/></svg>
<div class="a t" style="left:862.4px;top:636.81px;font-size:9.2px;line-height:9.2px;color:#222">Dim non-selected layers</div>
<div class="a" style="left:0px;top:652px;width:999px;height:5px;background:#d6d6d6;border-top:1px solid #a8a8a8"></div>
<div class="a" style="left:796px;top:654px;width:43px;height:4px;background:#f4f4f4;border:1px solid #8a8a8a;border-bottom:none;border-radius:2px 2px 0 0"></div>
</body></html>
